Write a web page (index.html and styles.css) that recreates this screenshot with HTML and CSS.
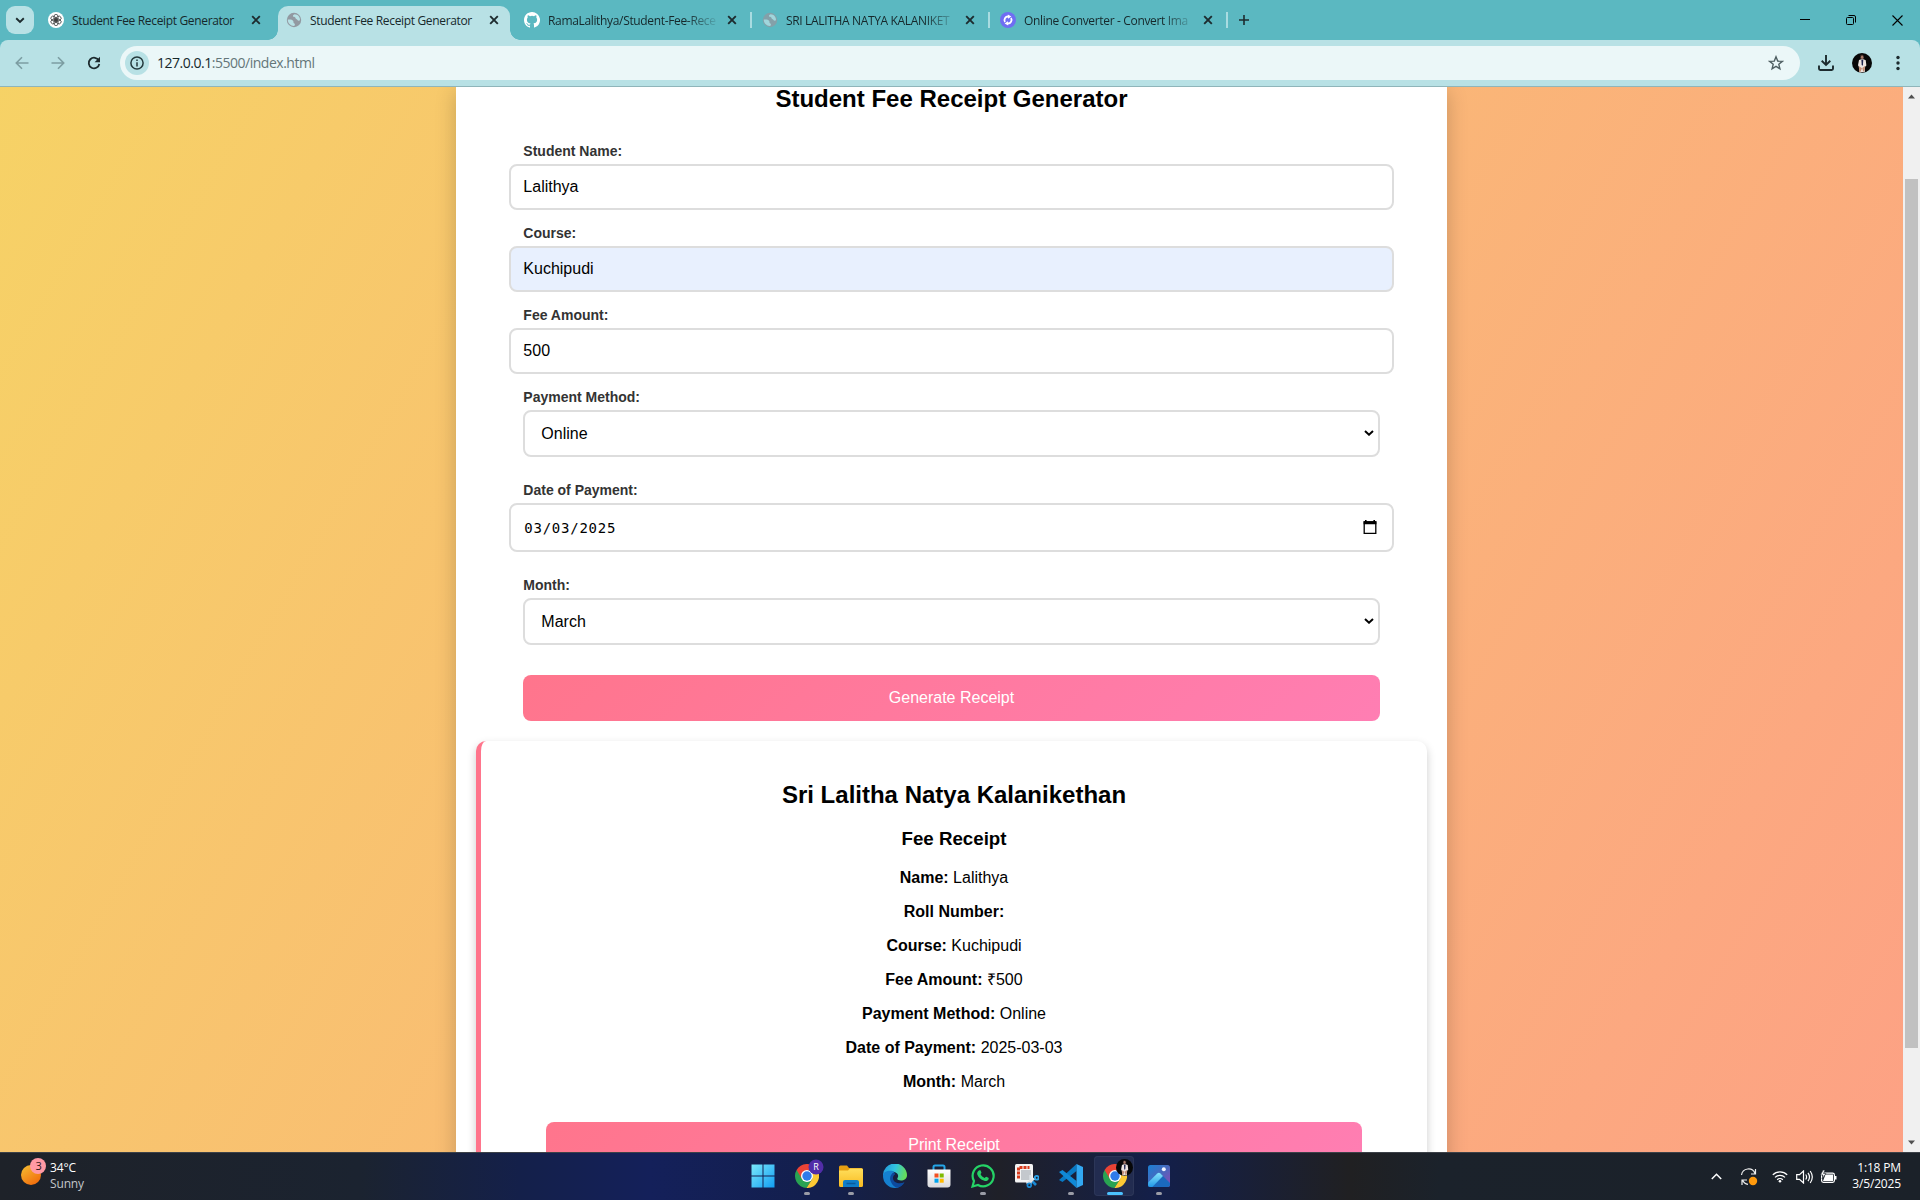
FILE: index.html
```html
<!DOCTYPE html>
<html lang="en">
<head>
<meta charset="utf-8">
<title>Student Fee Receipt Generator</title>
<link rel="stylesheet" href="styles.css">
</head>
<body>
<svg class="defs" width="0" height="0">
  <defs>
    <symbol id="x" viewBox="0 0 10 10"><path d="M1.200 1.200l7.600 7.600M8.800 1.200L1.200 8.800" stroke="#1d2b2e" stroke-width="1.900"/></symbol>
    <symbol id="globe" viewBox="0 0 16 16"><circle cx="8" cy="8" r="7.200" fill="#9299a1"/><path d="M1.800 7.600c1.600.2 3.800-.2 5 .8 1.200 1.200.2 2.200 1.200 2.800 1.200.5 1.200 1.500.2 2.800C4.800 14.200 1.600 11.500 1.800 7.600zM8.600 2.200c-1.400.6-2 1.300-1.400 2.200.7.900 2 .2 2.200 1.300.1 1.300 1.400 1.200 1.900 2.100.5 1 1.800 1.100 2.700.5.200-3.500-2.200-6-5.400-6.100z" fill="#b8e1e5"/></symbol>
    <symbol id="chev" viewBox="0 0 10 6"><path d="M1 1l4 3.700L9 1" fill="none" stroke="#000" stroke-width="2"/></symbol>
    <symbol id="chrome" viewBox="0 0 24 24"><path d="M1.600 6A12 12 0 0 0 11.500 24L17.200 15 12 12z" fill="#29a352"/><path d="M22.400 6A12 12 0 0 1 11.500 24L17.200 15 16 6z" fill="#fcc934"/><path d="M1.600 6L7 15 12 12 12 6 22.400 6A12 12 0 0 0 1.600 6z" fill="#ea4335"/><circle cx="12" cy="12" r="6" fill="#fff"/><circle cx="12" cy="12" r="4.700" fill="#2f7bea"/></symbol>
    <symbol id="person" viewBox="0 0 16 16"><circle cx="8" cy="8" r="8" fill="#070707"/><path d="M5.600 5.600L7.400 5h1.800l1.800.7.5 4.300-1 1-.3 4.200-4.200.3-.6-4.700-.6-1z" fill="#ece4e0"/><path d="M5.600 10.500l2.400 1.600-1.300 3h-.9zM8.200 12l2.200-1.600-.2 3.200-1.200 1.600z" fill="#c08c74"/><path d="M7.500 5.300h1.500l-.2 3.800-.6 1.200-.5-1.200z" fill="#20264e"/><path d="M6.600 1.800q1.700-1.200 2.800.4l.3 2.600H6.500z" fill="#3a2824"/><ellipse cx="8.100" cy="3.300" rx="1" ry="1.400" fill="#a97c6b"/></symbol>
    <linearGradient id="gWin" x1="0" y1="0" x2="24" y2="24" gradientUnits="userSpaceOnUse"><stop offset="0" stop-color="#7deafa"/><stop offset="1" stop-color="#0f9bf2"/></linearGradient>
    <linearGradient id="gFold" x1="0" y1="0" x2="0" y2="1"><stop offset="0" stop-color="#ffdf5c"/><stop offset="1" stop-color="#f9bb21"/></linearGradient>
    <linearGradient id="gEdge" x1="0" y1=".2" x2="1" y2=".4"><stop offset="0" stop-color="#2196dc"/><stop offset=".5" stop-color="#31c3e0"/><stop offset="1" stop-color="#66dd58"/></linearGradient>
    <linearGradient id="gSun" x1="0.1" y1="0" x2=".8" y2="1"><stop offset="0" stop-color="#f5bd31"/><stop offset="1" stop-color="#f1680b"/></linearGradient>
    <linearGradient id="gPh" x1="0" y1="0" x2="1" y2="1"><stop offset="0" stop-color="#1a80d4"/><stop offset=".5" stop-color="#4a68bd"/><stop offset="1" stop-color="#9146b3"/></linearGradient>
    <linearGradient id="gHill" x1="0" y1="0" x2="0" y2="1"><stop offset="0" stop-color="#86e4fc"/><stop offset="1" stop-color="#2197e6"/></linearGradient>
    <linearGradient id="gStore" x1="0" y1="0" x2="0" y2="1"><stop offset="0" stop-color="#fff"/><stop offset="1" stop-color="#d9d9dd"/></linearGradient>
  </defs>
</svg>

<header class="tabs">
  <div class="tab-search"><svg width="10" height="7" viewBox="0 0 10 7"><path d="M1.200 1.300L5 5l3.800-3.700" fill="none" stroke="#1d2b2e" stroke-width="1.900"/></svg></div>
  <div class="tab">
    <svg width="16" height="16" viewBox="0 0 16 16"><circle cx="8" cy="8" r="8" fill="#fff"/><g fill="none" stroke="#333" stroke-width=".75"><rect x="6" y="2.400" width="4" height="6.400" rx="2"/><rect x="6" y="2.400" width="4" height="6.400" rx="2" transform="rotate(60 8 8)"/><rect x="6" y="2.400" width="4" height="6.400" rx="2" transform="rotate(120 8 8)"/><rect x="6" y="2.400" width="4" height="6.400" rx="2" transform="rotate(180 8 8)"/><rect x="6" y="2.400" width="4" height="6.400" rx="2" transform="rotate(240 8 8)"/><rect x="6" y="2.400" width="4" height="6.400" rx="2" transform="rotate(300 8 8)"/></g></svg>
    <span class="title">Student Fee Receipt Generator</span><svg class="close"><use href="#x"/></svg>
  </div>
  <div class="tab active">
    <svg width="16" height="16"><use href="#globe"/></svg>
    <span class="title">Student Fee Receipt Generator</span><svg class="close"><use href="#x"/></svg>
  </div>
  <div class="tab sep">
    <svg width="16" height="16" viewBox="0 0 16 16"><path fill="#fff" d="M8 0C3.580 0 0 3.580 0 8c0 3.540 2.290 6.530 5.470 7.590.4.070.55-.17.55-.38v-1.490c-2.230.48-2.700-.94-2.700-.94-.36-.92-.89-1.170-.89-1.170-.73-.5.050-.49.050-.49.800.06 1.230.83 1.230.83.720 1.220 1.880.87 2.330.66.070-.52.280-.87.510-1.070-1.780-.2-3.640-.89-3.640-3.950 0-.87.310-1.590.820-2.150-.08-.2-.36-1.020.08-2.120 0 0 .67-.21 2.200.82a7.600 7.600 0 0 1 4 0c1.530-1.040 2.200-.82 2.200-.82.440 1.100.160 1.920.080 2.120.51.560.820 1.270.820 2.150 0 3.070-1.870 3.750-3.650 3.950.29.250.540.730.540 1.480v2.200c0 .21.150.46.550.38A8 8 0 0 0 8 0z"/></svg>
    <span class="title fade">RamaLalithya/Student-Fee-Rece</span><svg class="close"><use href="#x"/></svg>
  </div>
  <div class="tab sep dim">
    <svg width="16" height="16"><use href="#globe"/></svg>
    <span class="title fade">SRI LALITHA NATYA KALANIKET</span><svg class="close"><use href="#x"/></svg>
  </div>
  <div class="tab sep">
    <svg width="16" height="16" viewBox="0 0 16 16"><circle cx="8" cy="8" r="8" fill="#6f6df2"/><path d="M5 10a3.600 3.600 0 0 1 3.300-5.500M11 6a3.600 3.600 0 0 1-3.300 5.500" fill="none" stroke="#fff" stroke-width="1.800"/><path d="M7.800 2.600l3.600 1.900-3.300 2.300zM8.200 13.400l-3.600-1.900 3.300-2.300z" fill="#fff"/></svg>
    <span class="title fade">Online Converter - Convert Ima</span><svg class="close"><use href="#x"/></svg>
  </div>
  <svg class="plus" width="10" height="10" viewBox="0 0 10 10"><path d="M5 0v10M0 5h10" stroke="#1d2b2e" stroke-width="1.600"/></svg>
  <div class="winbtns">
    <svg width="10" height="10" viewBox="0 0 10 10"><path d="M0 4.500h10" stroke="#000"/></svg>
    <svg width="10" height="10" viewBox="0 0 10 10"><rect x=".5" y="2.500" width="7" height="7" rx="1" fill="none" stroke="#000"/><path d="M2.500.5H8a1.500 1.500 0 0 1 1.500 1.500v5.500" fill="none" stroke="#000"/></svg>
    <svg width="11" height="11" viewBox="0 0 11 11"><path d="M.5.5l10 10M10.500.5l-10 10" stroke="#000" stroke-width="1.100"/></svg>
  </div>
</header>

<div class="toolbar-wrap">
<nav class="toolbar">
  <div class="nav">
    <svg width="14" height="14" viewBox="0 0 14 14" fill="none" stroke="#7c9da2" stroke-width="1.600"><path d="M13.500 7H1.500M7 1.300L1.300 7 7 12.700"/></svg>
    <svg width="14" height="14" viewBox="0 0 14 14" fill="none" stroke="#7c9da2" stroke-width="1.600"><path d="M.5 7h12M7 1.300L12.700 7 7 12.700"/></svg>
    <svg width="14" height="14" viewBox="0 0 14 14"><path d="M11.800 4.600A5.300 5.300 0 1 0 12.300 8" fill="none" stroke="#1d2b2e" stroke-width="1.800"/><path d="M13 .8v5.400H7.600z" fill="#1d2b2e"/></svg>
  </div>
  <div class="omnibox">
    <div class="info"><svg width="14" height="14" viewBox="0 0 14 14"><circle cx="7" cy="7" r="6.100" fill="none" stroke="#24393c" stroke-width="1.500"/><path d="M7 6.200v4.200M7 3.500v1.500" stroke="#24393c" stroke-width="1.500"/></svg></div>
    <span class="url">127.0.0.1<span>:5500/index.html</span></span>
    <svg class="star" width="16" height="16" viewBox="0 0 16 16"><path d="M8 1.800l1.700 4.300 4.600.3-3.500 2.900 1.100 4.500L8 11.300l-3.900 2.500 1.100-4.500L1.700 6.400l4.600-.3z" fill="none" stroke="#4f5f62" stroke-width="1.400"/></svg>
  </div>
  <svg class="dl" width="16" height="16" viewBox="0 0 16 16" fill="none" stroke="#1d2b2e" stroke-width="1.900"><path d="M8 0v9.500M3.700 5.800L8 10l4.300-4.200M1 10.500v3.300q0 1.200 1.200 1.200h11.600q1.200 0 1.200-1.200v-3.300"/></svg>
  <svg class="avatar" width="20" height="20"><use href="#person"/></svg>
  <svg class="dots" width="4" height="16" viewBox="0 0 4 16" fill="#1d2b2e"><circle cx="2" cy="2.500" r="1.700"/><circle cx="2" cy="8" r="1.700"/><circle cx="2" cy="13.500" r="1.700"/></svg>
</nav>
</div>

<div class="view">
<main class="page">
  <section class="container">
    <h2>Student Fee Receipt Generator</h2>
    <div class="field"><label>Student Name:</label><div class="input">Lalithya</div></div>
    <div class="field"><label>Course:</label><div class="input filled">Kuchipudi</div></div>
    <div class="field"><label>Fee Amount:</label><div class="input">500</div></div>
    <div class="field select"><label>Payment Method:</label><div class="input">Online<svg width="10" height="6"><use href="#chev"/></svg></div></div>
    <div class="field date"><label>Date of Payment:</label><div class="input"><span>03/03/2025</span><svg width="14" height="15" viewBox="0 0 14 15"><path d="M1.200 2h11.600v11.300H1.200z" fill="none" stroke="#000" stroke-width="1.300"/><path d="M.6 1.200h12.800v3H.6zM2 0h1.600v2H2zM10.400 0H12v2h-1.600z"/></svg></div></div>
    <div class="field select"><label>Month:</label><div class="input">March<svg width="10" height="6"><use href="#chev"/></svg></div></div>
    <div class="btn">Generate Receipt</div>
    <article class="receipt">
      <h2>Sri Lalitha Natya Kalanikethan</h2>
      <h3>Fee Receipt</h3>
      <p><b>Name:</b> Lalithya</p>
      <p><b>Roll Number:</b></p>
      <p><b>Course:</b> Kuchipudi</p>
      <p><b>Fee Amount:</b> ₹500</p>
      <p><b>Payment Method:</b> Online</p>
      <p><b>Date of Payment:</b> 2025-03-03</p>
      <p><b>Month:</b> March</p>
      <div class="btn">Print Receipt</div>
    </article>
  </section>
</main>
<aside class="scroll">
  <svg width="7" height="5" viewBox="0 0 7 5"><path d="M0 4.500L3.500.5 7 4.500z" fill="#505050"/></svg>
  <div class="thumb"></div>
  <svg width="7" height="5" viewBox="0 0 7 5"><path d="M0 .5L3.500 4.500 7 .5z" fill="#505050"/></svg>
</aside>
</div>

<footer class="taskbar">
  <div class="weather">
    <svg width="26" height="28" viewBox="0 0 26 28"><circle cx="10" cy="17" r="10" fill="url(#gSun)"/><circle cx="17" cy="8" r="8" fill="#ff99a4"/><text x="17.500" y="12" text-anchor="middle" class="badge">3</text></svg>
    <div><span>34°C</span><span class="muted">Sunny</span></div>
  </div>
  <div class="apps">
    <div class="app"><svg width="24" height="24" viewBox="0 0 24 24"><path d="M.5.500h11v11H.5zM12.500.500h11v11h-11zM.5 12.500h11v11H.5zM12.500 12.500h11v11h-11z" fill="url(#gWin)"/></svg></div>
    <div class="app run"><svg width="24" height="24"><use href="#chrome"/></svg><svg class="over" width="16" height="16" viewBox="0 0 16 16"><circle cx="8" cy="8" r="7.500" fill="#512da8"/><text x="8" y="11.300" text-anchor="middle" class="badge r">R</text></svg></div>
    <div class="app run"><svg width="24" height="24" viewBox="0 0 24 24"><path d="M0 3q0-1.500 1.500-1.500H8l2 2.500h12.500Q24 4 24 5.500V9H0z" fill="#e69f12"/><path d="M0 6.500h9l2-2h11.500Q24 4.500 24 6v15.500q0 1.500-1.500 1.500h-21Q0 23 0 21.500z" fill="url(#gFold)"/><path d="M4 23v-5q0-2 2-2h12q2 0 2 2v5z" fill="#0f7cc8"/><path d="M7.500 19.500h9" stroke="#0a5a9c" stroke-width="1.500"/></svg></div>
    <div class="app"><svg width="24" height="24" viewBox="0 0 24 24"><path d="M0 12A12 12 0 0 1 24 11c0 4-3 5.500-6 5.500-2.500 0-4.500-1-3.500-2.500C17 10 12 6.500 7 8 3 9 .5 11 0 12z" fill="url(#gEdge)"/><path d="M0 12c0-5 8-6.500 11.500-3.800C9 9 7.500 12 8.500 15.500c1.500 4.500 7.500 6 12.500 3C18.500 22 15.500 24 12 24A12 12 0 0 1 0 12z" fill="#1580d0"/><path d="M11.500 8.500C7.500 10 6 14 8 18c1.300 3 4 5.500 6.500 5.700 3-.7 5.800-3 7-5.500-5 2.500-11.500.5-11.500-4.200 0-2 .8-2.800 2-3.500z" fill="#0d4a9e"/></svg></div>
    <div class="app"><svg width="24" height="24" viewBox="0 0 24 24"><path d="M6.500 7V3Q6.500 1.500 8 1.500h8q1.500 0 1.500 1.500v4" fill="none" stroke="#24a5e8" stroke-width="2"/><path d="M.5 5.500h23v15q0 3-3 3h-17q-3 0-3-3z" fill="url(#gStore)"/><path d="M7.500 9.500h4v4h-4z" fill="#f25022"/><path d="M12.700 9.500h4v4h-4z" fill="#7fba00"/><path d="M7.500 14.700h4v4h-4z" fill="#00a4ef"/><path d="M12.700 14.700h4v4h-4z" fill="#ffb900"/></svg></div>
    <div class="app run"><svg width="24" height="24" viewBox="0 0 24 24"><path d="M1.500 22.500l1.500-5.500a10.500 10.500 0 1 1 4 4z" fill="none" stroke="#25d366" stroke-width="2.200"/><path d="M8.300 6.300c.5-.3 1.100-.2 1.300.3l.8 2c.1.500-.8 1.300-.8 1.700.8 1.800 2.300 3 4 3.700.5 0 1.200-1.300 1.700-1.200l2.100 1c.5.3.3 1.300-.1 1.900-.8 1.200-2.500 1.600-4 1.100-3.700-1-6-3.500-7-6.200-.6-1.700.5-3.500 2-4.300z" fill="#25d366"/></svg></div>
    <div class="app"><svg width="24" height="24" viewBox="0 0 24 24"><rect width="18" height="18.500" rx="1.500" fill="#f4f4f4"/><path d="M3.500 14.500V3.500H14.500" fill="none" stroke="#d83b1d" stroke-width="3" stroke-dasharray="3 1"/><path d="M6 6h10v10H6z" fill="#c4c8cd"/><path d="M11.500 19.500l9-5.500M15.500 11v9" stroke="#dfe4e8" stroke-width="2.300"/><circle cx="21.700" cy="13.800" r="1.900" fill="none" stroke="#2aa3ea" stroke-width="1.800"/><circle cx="14.300" cy="21.300" r="1.900" fill="none" stroke="#1b8ad4" stroke-width="1.800"/><path d="M17.500 17.500l3.500 3.500" stroke="#1b8ad4" stroke-width="2.600"/></svg></div>
    <div class="app run"><svg width="24" height="24" viewBox="0 0 24 24"><path d="M17.500 0v7L3.500 18 0 16z" fill="#0879c4"/><path d="M0 8l3.500-2 14 11v7z" fill="#1089d6"/><path d="M17.500 0L24 3v18l-6.500 3z" fill="#32a8f2"/></svg></div>
    <div class="app run on"><svg width="24" height="24"><use href="#chrome"/></svg><svg class="over" width="17" height="17"><use href="#person"/></svg></div>
    <div class="app run"><svg width="24" height="24" viewBox="0 0 24 24"><rect x="1" y="1" width="22" height="22" rx="2.500" fill="url(#gPh)"/><path d="M1 18.500L10.200 9.400q1.600-1.300 3.200 0L23 19v1.500q0 2.500-2.500 2.500h-17Q1 23 1 20.500z" fill="#1b69bd"/><path d="M1.300 18.200L10.200 9.400q1.600-1.300 3.200 0l2.600 2.600L5.300 23H3.500Q1 23 1 20.500z" fill="url(#gHill)"/><circle cx="16.800" cy="5.200" r="2" fill="#f2f4ff"/></svg></div>
  </div>
  <div class="tray">
    <svg width="11" height="7" viewBox="0 0 11 7"><path d="M.8 6l4.700-4.700L10.200 6" fill="none" stroke="#fff" stroke-width="1.500"/></svg>
    <svg class="sync" width="18" height="18" viewBox="0 0 18 18" fill="none" stroke="#eee" stroke-width="1.200"><path d="M1.500 7A7 7 0 0 1 15 5.500M15.500 1v5H11M8 16.300A7 7 0 0 1 2.500 12M2 17v-5h5"/><circle cx="13" cy="13" r="4.200" fill="#ff9a0d" stroke="none"/></svg>
    <svg width="16" height="13" viewBox="0 0 16 13" fill="none" stroke="#fff" stroke-width="1.300"><path d="M.8 4.900a10.200 10.200 0 0 1 14.400 0M3 7.400a7.100 7.100 0 0 1 10 0M5.200 9.700a4 4 0 0 1 5.600 0"/><circle cx="8" cy="11.300" r="1.300" fill="#fff" stroke="none"/></svg>
    <svg width="17" height="14" viewBox="0 0 17 14" fill="none" stroke="#fff" stroke-width="1.200"><path d="M.7 4.700h2.800L7.500 1v12L3.500 9.300H.7zM9.700 4.500q1.800 2.500 0 5M12 2.800q3 4.200 0 8.400M14.200 1q4.200 6 0 12"/></svg>
    <svg class="batt" width="17" height="14" viewBox="0 0 17 14"><rect x="1.600" y="3.100" width="12.800" height="9.300" rx="1.800" fill="none" stroke="#fff" stroke-width="1.200"/><path d="M5.500 4.500h7.500v6.500H3zM15 6h1.500v3.500H15z" fill="#fff"/><path d="M3 0L.5 5H3L2 9l4-5.500H3.500L5 0z" fill="#fff" stroke="#1b2129" stroke-width=".6"/></svg>
    <div class="clock"><span>1:18 PM</span><span>3/5/2025</span></div>
  </div>
</footer>
</body>
</html>
```
FILE: styles.css
```css
* { box-sizing: border-box; }
body {
  margin: 0;
  width: 1920px;
  height: 1200px;
  overflow: hidden;
  display: flex;
  flex-direction: column;
  font-family: "Liberation Sans", Arial, sans-serif;
}
svg { flex: none; display: block; }
.defs { position: absolute; }

/* Tab strip */
.tabs {
  height: 40px;
  flex: none;
  display: flex;
  align-items: center;
  background: #5bb8c1;
  padding-left: 6px;
  font: 12px "Open Sans", "Noto Sans", sans-serif;
  color: #16282b;
}
.tab-search {
  width: 28px;
  height: 28px;
  border-radius: 9px;
  background: #b8e1e5;
  display: grid;
  place-items: center;
  margin-right: 6px;
}
.tab {
  position: relative;
  width: 238px;
  height: 40px;
  display: flex;
  align-items: center;
  padding-left: 8px;
}
.tab .title {
  width: 170px;
  margin-left: 8px;
  white-space: nowrap;
  letter-spacing: -0.34px;
}
.tab .fade {
  -webkit-mask-image: linear-gradient(90deg, #000 138px, transparent 172px);
  mask-image: linear-gradient(90deg, #000 138px, transparent 172px);
}
.tab .close { width: 10px; height: 10px; margin-left: 9px; }
.tab.active::before {
  content: "";
  position: absolute;
  z-index: -1;
  left: 0;
  top: 6px;
  width: 232px;
  height: 34px;
  border-radius: 10px 10px 0 0;
  background: #b8e1e5;
}
.tab.active { z-index: 0; }
.tab.active::after {
  content: "";
  position: absolute;
  z-index: -1;
  left: -10px;
  bottom: 0;
  width: 252px;
  height: 10px;
  background:
    radial-gradient(circle at 0 0, transparent 9.500px, #b8e1e5 10px) left / 10px 10px no-repeat,
    radial-gradient(circle at 100% 0, transparent 9.500px, #b8e1e5 10px) right / 10px 10px no-repeat;
}
.tab.sep::after {
  content: "";
  position: absolute;
  right: 2px;
  top: 12px;
  width: 2px;
  height: 16px;
  background: #a9dce1;
}
.dim > svg:first-child { opacity: .75; }
.plus { margin-left: 9px; }
.winbtns { margin-left: auto; display: flex; align-items: center; gap: 36px; padding-right: 17px; }

/* Toolbar */
.toolbar-wrap { flex: none; background: #5bb8c1; }
.toolbar {
  height: 47px;
  background: #b8e1e5;
  border-bottom: 1px solid #8fb5ba;
  border-radius: 8px 8px 0 0;
  display: flex;
  align-items: center;
}
.nav { display: flex; gap: 22px; width: 120px; padding-left: 15px; }
.omnibox {
  width: 1680px;
  height: 34px;
  border-radius: 17px;
  background: #ebf7f8;
  display: flex;
  align-items: center;
  padding: 0 16px 0 5px;
}
.info {
  width: 24px;
  height: 24px;
  border-radius: 50%;
  background: #b8e1e5;
  display: grid;
  place-items: center;
}
.url { margin: -1px 0 0 8px; font: 14px "Open Sans", "Noto Sans", sans-serif; letter-spacing: -0.48px; color: #16282b; }
.url span { color: #647679; }
.star { margin-left: auto; }
.dl { margin-left: 18px; }
.avatar { margin-left: 18px; }
.dots { margin-left: 24px; }

/* Page viewport */
.view { height: 1065px; flex: none; display: flex; overflow: hidden; }
.page {
  width: 1903px;
  height: 1065px;
  overflow: hidden;
  background: linear-gradient(120deg, #f6d365, #fda085) 0 -93px / 1903px 1265px;
}
.container {
  width: 991.500px;
  height: 1200px;
  margin: 0 auto;
  padding: 0 20px;
  background: #fff;
  box-shadow: 0 4px 20px rgba(0, 0, 0, .2);
  display: flex;
  flex-direction: column;
  align-items: center;
}
h2, h3, p { margin: 0; text-align: center; color: #000; }
h2 { font-size: 24px; line-height: 26px; }
.container > h2 { margin: -1px 0 30px; }
.receipt h2 { line-height: 28px; }
.field { width: 884.350px; height: 82px; }
.field label {
  display: block;
  height: 22px;
  line-height: 16px;
  padding: 1px 0 0 14px;
  font-size: 14px;
  font-weight: bold;
  color: #333;
}
.input {
  height: 46px;
  border: 2px solid #ddd;
  border-radius: 8px;
  padding: 0 12px;
  display: flex;
  align-items: center;
  justify-content: space-between;
  font-size: 16px;
  background: #fff;
  color: #000;
}
.filled { background: #e8f0fe; }
.select { width: 856.350px; height: 93px; }
.select label { padding-left: 0; }
.select .input { height: 47px; padding: 0 4px 0 16px; }
.select svg { margin-bottom: 1px; }
.date { height: 95px; }
.date .input { height: 49px; padding-right: 15px; font: 14px "DejaVu Sans Mono", monospace; }
.date .input span { letter-spacing: .75px; padding-left: 1px; }
.btn {
  width: 90%;
  height: 46px;
  flex: none;
  border-radius: 8px;
  background: linear-gradient(135deg, #ff758c, #ff7eb3);
  color: #fff;
  font-size: 16px;
  line-height: 46px;
  text-align: center;
}
.container > .btn { margin-top: 6px; }
.receipt {
  width: 951.500px;
  height: 470px;
  margin-top: 20px;
  padding: 40px 20px;
  border-left: 5px solid #ff758c;
  border-radius: 10px;
  background: #fff;
  box-shadow: 0 4px 10px rgba(0, 0, 0, .2);
  display: flex;
  flex-direction: column;
  align-items: center;
}
.receipt h3 { font-size: 18.720px; line-height: 22px; margin: 19px 0; }
.receipt p { font-size: 16px; line-height: 18px; margin-bottom: 16px; }
.receipt .btn { margin-top: 15px; }

/* Page scrollbar */
.scroll {
  width: 17px;
  background: #f0f0f0;
  display: flex;
  flex-direction: column;
  align-items: center;
  padding: 7px 0 7px;
}
.scroll .thumb { width: 13px; height: 869px; margin: 80px 0 auto; background: #c1c1c1; }

/* Taskbar */
.taskbar {
  position: relative;
  height: 48px;
  flex: none;
  display: flex;
  justify-content: space-between;
  border-top: 1px solid #3c4148;
  background: linear-gradient(90deg, #1e2229 0, #1b2330 360px, #14204a 520px, #14205a 650px, #131f4c 830px, #1f2028 1000px, #131f4a 1160px, #202022 1350px, #1b222b 1440px, #1b2129 1920px);
  font: 12px "Open Sans", "Noto Sans", sans-serif;
  letter-spacing: -.15px;
  color: #fff;
}
.weather { display: flex; padding-left: 21px; width: 400px; }
.weather svg { margin-top: 5px; }
.weather div { display: flex; flex-direction: column; padding: 7px 0 0 3px; line-height: 16px; }
.muted { color: #c3c6ca; }
.badge { font: 11px "Open Sans", sans-serif; fill: #2b1518; }
.badge.r { font-size: 9px; fill: #fff; }
.apps { position: absolute; left: 742px; top: 3px; display: flex; gap: 4px; }
.app { position: relative; width: 40px; height: 40px; border-radius: 4px; display: grid; place-items: center; }
.app > svg:first-child { margin-left: 1px; }
.app.on { background: #222c50; box-shadow: inset 0 0 0 1px #2c3658; }
.app .over { position: absolute; left: 22px; top: 3px; }
.app.run::after { content: ""; position: absolute; left: 18px; bottom: 1px; width: 6px; height: 3px; border-radius: 2px; background: #9a9ca6; }
.app.on::after { left: 13px; width: 16px; background: #4cc2ff; }
.tray { display: flex; align-items: center; padding-right: 19px; }
.tray svg + svg { margin-left: 8px; }
.tray svg.sync { margin: 0 6px 0 18px; }
.tray svg.batt { margin: 0 1px 0 7px; }
.clock { width: 63px; display: flex; flex-direction: column; line-height: 16px; text-align: right; margin-bottom: 1px; }
```
